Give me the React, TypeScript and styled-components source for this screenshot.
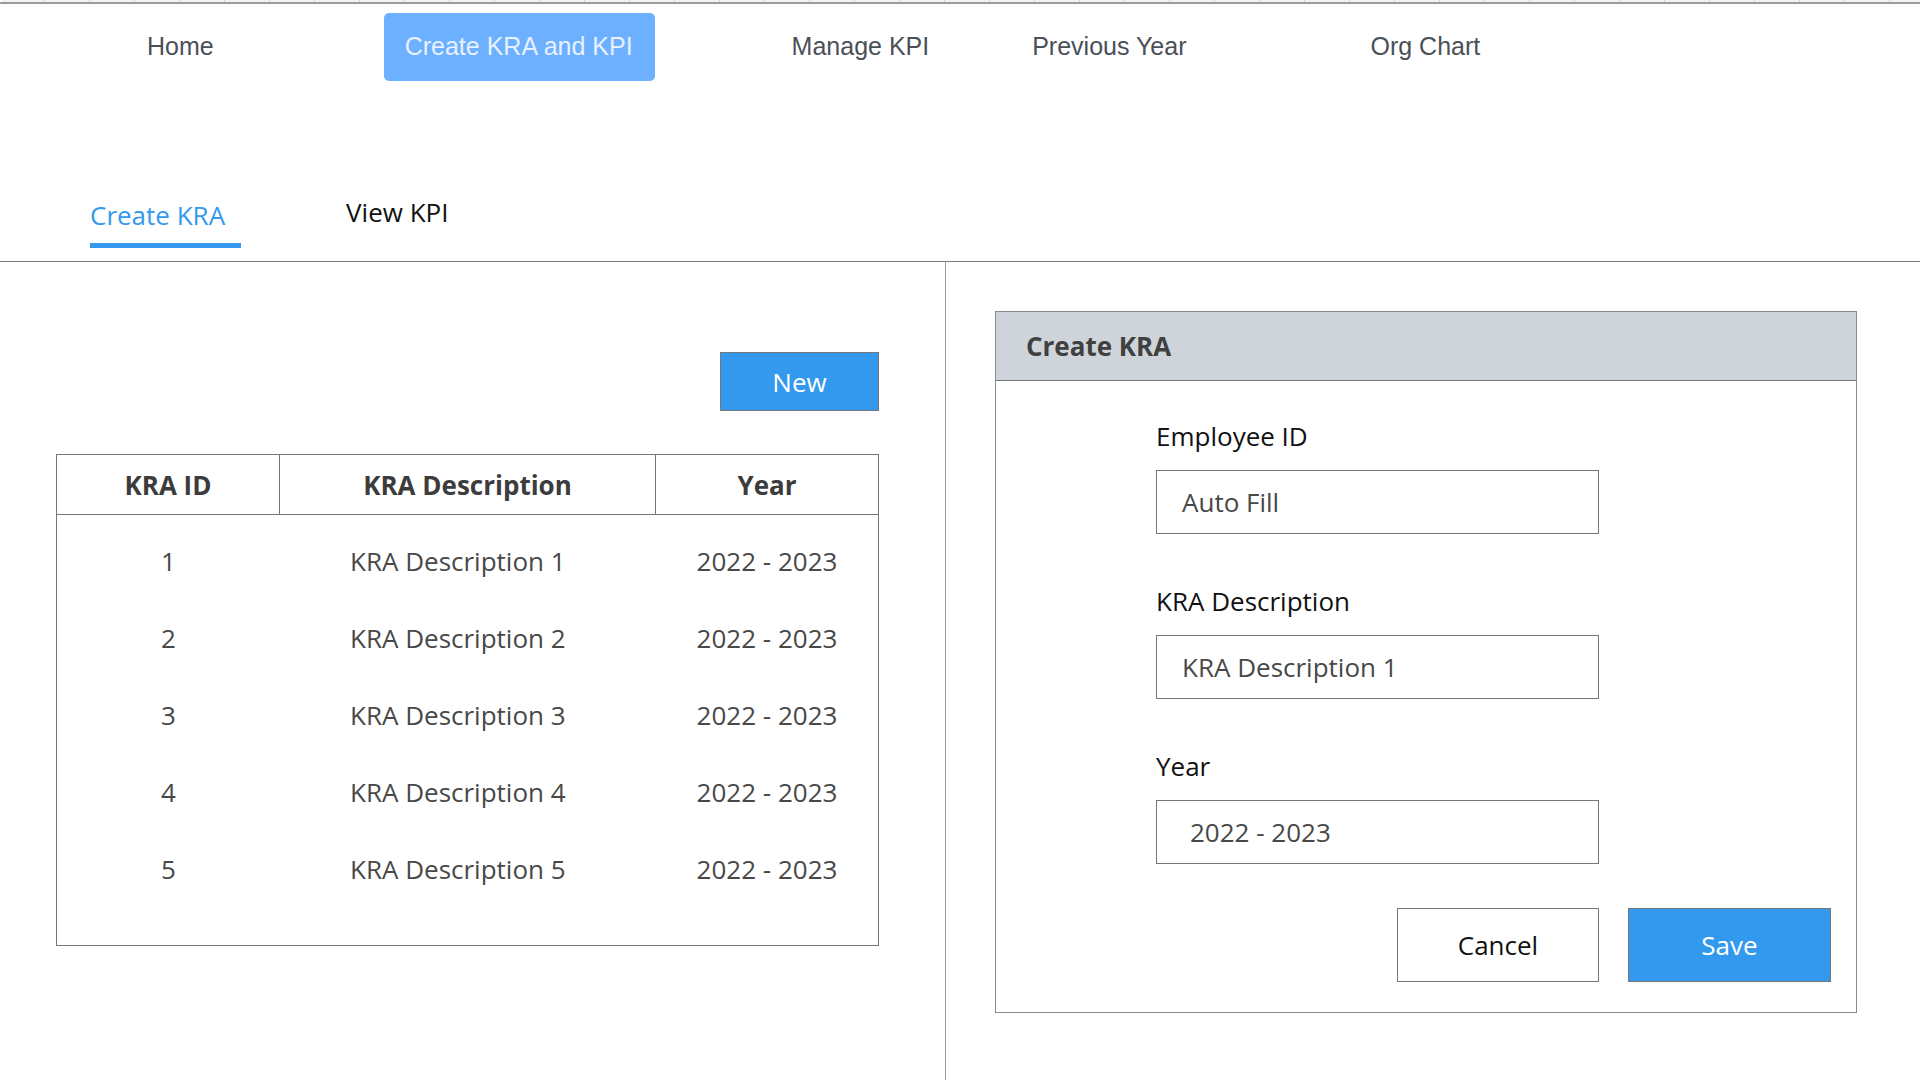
import React, { FC } from 'react'
import styled, { createGlobalStyle } from 'styled-components'

const GlobalStyle = createGlobalStyle`
  body {
    margin: 0;
    background: #ffffff;
    font-family: 'Open Sans', 'Noto Sans', sans-serif;
  }
`

const Page = styled.div`
  width: 1920px;
  height: 1080px;
  overflow: hidden;
  display: flex;
  flex-direction: column;
`

const TopEdge = styled.div`
  height: 2px;
  background: repeating-linear-gradient(
    90deg,
    #f3f3f3 0,
    #f3f3f3 44px,
    #d8d8d8 44px,
    #d8d8d8 45px
  );
  border-bottom: 2px solid #9c9c9c;
  border-top-left-radius: 4px;
`

const NavBar = styled.nav`
  display: flex;
  align-items: center;
  height: 68px;
  margin-top: 9px;
  padding-left: 147px;
  font-family: 'Liberation Sans', Arial, sans-serif;
  font-size: 25px;
`

const NavItem = styled.div<{ $offset: number; $active?: boolean }>`
  margin-left: ${(p) => p.$offset}px;
  height: 68px;
  display: flex;
  align-items: center;
  padding-bottom: 2px;
  box-sizing: border-box;
  color: ${(p) => (p.$active ? '#e8f1ff' : '#4b5058')};
  background: ${(p) => (p.$active ? '#6cb0ff' : 'transparent')};
  border-radius: 5px;
  padding-left: ${(p) => (p.$active ? 21 : 0)}px;
  padding-right: ${(p) => (p.$active ? 22 : 0)}px;
  cursor: pointer;
`

const TabBar = styled.div`
  display: flex;
  align-items: flex-end;
  height: 181px;
  padding-left: 90px;
  padding-bottom: 13px;
  box-sizing: border-box;
  border-bottom: 1px solid #7a7a7a;
  font-size: 26px;
`

const Tab = styled.div<{ $active?: boolean; $gap: number; $lift?: number }>`
  margin-left: ${(p) => p.$gap}px;
  line-height: 35px;
  padding-bottom: ${(p) => 10 + (p.$lift || 0)}px;
  padding-right: ${(p) => (p.$active ? 16 : 0)}px;
  border-bottom: 5px solid ${(p) => (p.$active ? '#3399ee' : 'transparent')};
  color: ${(p) => (p.$active ? '#3399ee' : '#111111')};
  cursor: pointer;
`

const Main = styled.div`
  flex: 1;
  display: grid;
  grid-template-columns: 946px 1fr;
`

const LeftPane = styled.section`
  border-right: 1px solid #9a9a9a;
  padding: 90px 66px 0 57px;
  display: flex;
  flex-direction: column;
  align-items: flex-end;
`

const RightPane = styled.section`
  padding: 49px 62px 0 49px;
`

const Button = styled.button<{ $primary?: boolean; $w: number; $h: number }>`
  width: ${(p) => p.$w}px;
  height: ${(p) => p.$h}px;
  font-family: 'Open Sans', 'Noto Sans', sans-serif;
  font-size: 26px;
  color: ${(p) => (p.$primary ? '#ffffff' : '#111111')};
  background: ${(p) => (p.$primary ? '#3399ee' : '#ffffff')};
  border: 1px solid #777777;
  padding: 0;
  cursor: pointer;
`

const Table = styled.div`
  margin-top: 43px;
  width: 823px;
  height: 492px;
  box-sizing: border-box;
  border: 1px solid #777777;
  display: flex;
  flex-direction: column;
`

const Row = styled.div<{ $h: number }>`
  display: grid;
  grid-template-columns: 223px 376px 1fr;
  height: ${(p) => p.$h}px;
  flex-shrink: 0;
`

const HeadRow = styled(Row)`
  border-bottom: 1px solid #777777;
`

const TableBody = styled.div`
  padding-top: 7px;
`

const HeadCell = styled.div<{ $last?: boolean }>`
  display: flex;
  align-items: center;
  justify-content: center;
  font-weight: 700;
  font-size: 26px;
  color: #3c3c3c;
  border-right: ${(p) => (p.$last ? 'none' : '1px solid #777777')};
`

const Cell = styled.div<{ $left?: boolean }>`
  display: flex;
  align-items: center;
  justify-content: ${(p) => (p.$left ? 'flex-start' : 'center')};
  padding-left: ${(p) => (p.$left ? 70 : 0)}px;
  font-size: 26px;
  color: #484848;
`

const Card = styled.div`
  width: 862px;
  height: 702px;
  box-sizing: border-box;
  border: 1px solid #8a8a8a;
  display: flex;
  flex-direction: column;
`

const CardHeader = styled.div`
  height: 69px;
  box-sizing: border-box;
  display: flex;
  align-items: center;
  padding-left: 30px;
  background: #cfd4da;
  border-bottom: 1px solid #777777;
  font-size: 26px;
  font-weight: 700;
  color: #404040;
`

const CardBody = styled.div`
  padding: 38px 25px 0 160px;
  display: flex;
  flex-direction: column;
  gap: 50px;
`

const Field = styled.div`
  display: flex;
  flex-direction: column;
`

const Label = styled.label`
  font-size: 26px;
  line-height: 35px;
  color: #111111;
  margin-bottom: 16px;
`

const Input = styled.div<{ $inset: number }>`
  width: 443px;
  height: 64px;
  box-sizing: border-box;
  border: 1px solid #777777;
  display: flex;
  align-items: center;
  padding-left: ${(p) => p.$inset}px;
  font-size: 26px;
  color: #484848;
`

const Actions = styled.div`
  display: flex;
  justify-content: flex-end;
  gap: 29px;
  margin-top: -6px;
`

const navItems = [
  { label: 'Home', offset: 0 },
  { label: 'Create KRA and KPI', offset: 170, active: true },
  { label: 'Manage KPI', offset: 137 },
  { label: 'Previous Year', offset: 103 },
  { label: 'Org Chart', offset: 184 },
]

const rows = [1, 2, 3, 4, 5].map((id) => ({
  id,
  description: `KRA Description ${id}`,
  year: '2022 - 2023',
}))

const App: FC = () => {
  return (
    <Page>
      <GlobalStyle />
      <TopEdge />
      <NavBar>
        {navItems.map((item) => (
          <NavItem key={item.label} $offset={item.offset} $active={item.active}>
            {item.label}
          </NavItem>
        ))}
      </NavBar>
      <TabBar>
        <Tab $active $gap={0}>
          Create KRA
        </Tab>
        <Tab $gap={105} $lift={3}>
          View KPI
        </Tab>
      </TabBar>
      <Main>
        <LeftPane>
          <Button $primary $w={159} $h={59}>
            New
          </Button>
          <Table>
            <HeadRow $h={59}>
              <HeadCell>KRA ID</HeadCell>
              <HeadCell>KRA Description</HeadCell>
              <HeadCell $last>Year</HeadCell>
            </HeadRow>
            <TableBody>
              {rows.map((row) => (
                <Row key={row.id} $h={77}>
                  <Cell>{row.id}</Cell>
                  <Cell $left>{row.description}</Cell>
                  <Cell>{row.year}</Cell>
                </Row>
              ))}
            </TableBody>
          </Table>
        </LeftPane>
        <RightPane>
          <Card>
            <CardHeader>Create KRA</CardHeader>
            <CardBody>
              <Field>
                <Label>Employee ID</Label>
                <Input $inset={25}>Auto Fill</Input>
              </Field>
              <Field>
                <Label>KRA Description</Label>
                <Input $inset={25}>KRA Description 1</Input>
              </Field>
              <Field>
                <Label>Year</Label>
                <Input $inset={33}>2022 - 2023</Input>
              </Field>
              <Actions>
                <Button $w={202} $h={74}>
                  Cancel
                </Button>
                <Button $primary $w={203} $h={74}>
                  Save
                </Button>
              </Actions>
            </CardBody>
          </Card>
        </RightPane>
      </Main>
    </Page>
  )
}

export default App
